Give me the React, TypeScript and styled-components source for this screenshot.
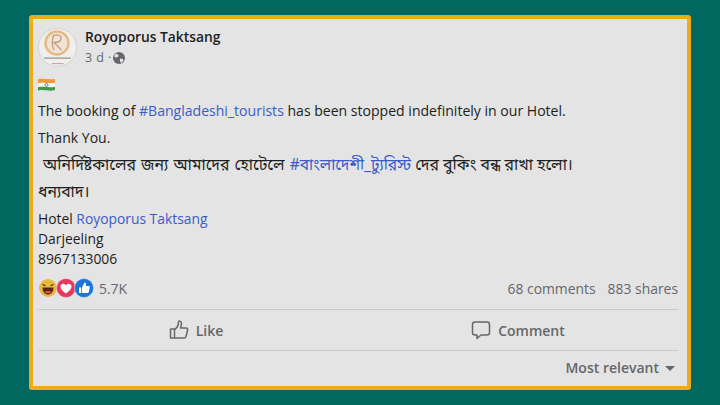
import React from "react";
import styled, { createGlobalStyle } from "styled-components";

const GlobalStyle = createGlobalStyle`
  html, body {
    margin: 0;
    padding: 0;
  }
  body {
    font-family: "Open Sans", "Noto Sans", "Liberation Sans", sans-serif;
  }
`;

const Page = styled.div`
  box-sizing: border-box;
  width: 720px;
  height: 405px;
  padding: 15px 29px;
  background-color: #01685f;
  overflow: hidden;
`;

const Card = styled.article`
  box-sizing: border-box;
  height: 375px;
  padding: 9px 9px 0 5px;
  display: flex;
  flex-direction: column;
  background-color: #e4e4e4;
  border: 4px solid #efab1b;
  border-radius: 3px;
`;

const Header = styled.header`
  display: flex;
  gap: 8px;
  height: 40px;
`;

const Avatar = styled.svg`
  width: 39px;
  height: 39px;
  flex: none;
`;

const Author = styled.div`
  display: flex;
  flex-direction: column;
  margin-top: -1px;
`;

const Name = styled.div`
  font-size: 13.8px;
  line-height: 20px;
  font-weight: 600;
  color: #1c1e21;
`;

const Meta = styled.div`
  display: flex;
  align-items: center;
  gap: 1px;
  margin-top: 2px;
  font-size: 12.5px;
  line-height: 17px;
  color: #65676b;
  letter-spacing: 0.4px;
`;

const Body = styled.div`
  margin-top: 6px;
  color: #1c1e21;
  font-size: 14.05px;
`;

const FlagWrap = styled.div`
  height: 22px;
  display: flex;
  align-items: center;
`;

const Line = styled.p<{ $gap?: number; $bn?: boolean; $size?: number }>`
  margin: ${(p) => p.$gap ?? 0}px 0 0;
  line-height: 20px;
  font-size: ${(p) => (p.$bn ? 15.8 : p.$size ?? 14.05)}px;
  font-family: ${(p) =>
    p.$bn
      ? '"Noto Sans Bengali", "Noto Serif Bengali", "Lohit Bengali", "FreeSerif", "Open Sans", sans-serif'
      : "inherit"};
`;

const Lead = styled.span`
  word-spacing: 1px;
`;

const Tag = styled.span<{ $size?: number }>`
  color: #3b5bc9;
  font-size: ${(p) => (p.$size ? `${p.$size}px` : "inherit")};
`;

const Stats = styled.div`
  margin-top: 4px;
  height: 30px;
  padding-bottom: 6px;
  display: flex;
  align-items: center;
  justify-content: space-between;
  color: #65676b;
  font-size: 13.9px;
`;

const Reactions = styled.div`
  display: flex;
  align-items: center;
  gap: 5px;
`;

const ReactionIcons = styled.svg`
  width: 56px;
  height: 20px;
`;

const Counts = styled.div`
  display: flex;
  gap: 12px;
`;

const Actions = styled.div`
  height: 40px;
  display: flex;
  border-top: 1px solid #c9c9c9;
  border-bottom: 1px solid #c9c9c9;
`;

const ActionButton = styled.div<{ $inset?: number }>`
  box-sizing: border-box;
  width: 50%;
  padding-right: ${(p) => p.$inset ?? 0}px;
  display: flex;
  align-items: center;
  justify-content: center;
  gap: 7px;
  color: #65676b;
  font-size: 14px;
  font-weight: 600;
`;

const Sort = styled.div`
  height: 32px;
  display: flex;
  align-items: center;
  justify-content: flex-end;
  gap: 6px;
  padding-right: 3px;
  color: #65676b;
  font-size: 14px;
  font-weight: 600;
`;

const Caret = styled.span`
  width: 0;
  height: 0;
  margin-top: 2px;
  border-left: 5px solid transparent;
  border-right: 5px solid transparent;
  border-top: 5px solid #65676b;
`;

const ActionIcon = styled.svg`
  width: 20px;
  height: 20px;
  fill: none;
  stroke: #65676b;
  stroke-width: 1.5;
  stroke-linejoin: round;
  stroke-linecap: round;
`;

const LogoAvatar = () => (
  <Avatar viewBox="0 0 39 39">
    <circle cx="19.5" cy="19.5" r="19" fill="#f1efec" stroke="#cfcdca" strokeWidth="0.8" />
    <circle cx="19" cy="15" r="11.5" fill="#efe4d8" stroke="#e6b985" strokeWidth="2.4" />
    <path d="M15 8c4-2 9-1 8 3s-5 3.500-7 3.500l7.500 7.500M15.500 7.500C14 12 14 18 16 22" fill="none" stroke="#c19a7c" strokeWidth="1.300" />
    <rect x="6" y="29.500" width="27" height="1.200" fill="#94918c" />
    <rect x="13.500" y="35" width="12" height="1.200" fill="#d3a0a8" />
  </Avatar>
);

const Flag = () => (
  <svg width="17" height="14" viewBox="1 1.500 15 12">
    <path d="M1 2.500c5-1.500 10 1 15-.5v3.500c-5 1.500-10-1-15 .5z" fill="#f2993a" />
    <path d="M1 6c5-1.500 10 1 15-.5V9C11 10.500 6 8 1 9.500z" fill="#f4f4f4" />
    <path d="M1 9.500C6 8 11 10.500 16 9v3c-5 1.500-10-1-15 .5z" fill="#3f9a45" />
    <circle cx="8.500" cy="7.500" r="1.300" fill="none" stroke="#44519a" strokeWidth="0.600" />
  </svg>
);

const Globe = () => (
  <svg width="12" height="12" viewBox="0 0 12 12">
    <circle cx="6" cy="6" r="6" fill="#65676b" />
    <path d="M3 1.500 5.500 3 5 5 2.500 5.500 1 4zM7 6.500l3 .5.500 1.500L8.500 11 7 9.500z" fill="#e4e4e4" />
  </svg>
);

const ReactionStrip = () => (
  <ReactionIcons viewBox="0 0 56 20">
    <circle cx="10" cy="10" r="9" fill="#e8b93f" />
    <path d="M4.500 9.500h11C15.500 14 13 16.500 10 16.500S4.500 14 4.500 9.500z" fill="#5b2415" />
    <path d="M6.500 14c1-1.300 6-1.300 7 0-1 1.800-6 1.800-7 0z" fill="#e0524c" />
    <path d="M4.500 6.500l3 1.200M15.500 6.500l-3 1.200" stroke="#5b2415" strokeWidth="1.200" />
    <circle cx="28" cy="10" r="9.500" fill="#e5385a" stroke="#e4e4e4" strokeWidth="0.500" />
    <path d="M28 15.500c-4-3-5.500-4.800-5.500-7 0-3 4-3.800 5.500-1 1.500-2.800 5.500-2 5.500 1 0 2.200-1.500 4-5.500 7z" fill="#fff" />
    <circle cx="46" cy="10" r="9.500" fill="#1b74d8" stroke="#e4e4e4" strokeWidth="0.500" />
    <path d="M41 9.500h2.200v5.500H41zM44 9.500l2.500-5c1.500 0 1.800 1 1.500 3.500h3c.8 0 1 .8.800 1.500l-1 4.500c-.2.600-.6 1-1.300 1H44z" fill="#fff" />
  </ReactionIcons>
);

const LikeIcon = () => (
  <ActionIcon viewBox="0 0 20 20">
    <path d="M1.500 9h4v9h-4zM5.500 9.500C8 8 9.500 5 9.500 2c0-1.500 3-1.300 3 1.500 0 1.500-.5 3-1 4.500h5.500c1.500 0 2 1.500 1.500 2.500l-1.500 6c-.3 1-1 1.500-2 1.500H5.500" />
  </ActionIcon>
);

const CommentIcon = () => (
  <ActionIcon viewBox="0 0 20 20">
    <path d="M4 2h12c1.500 0 2.500 1 2.500 2.500v8c0 1.500-1 2.500-2.500 2.500H10l-4 3.500V15H4c-1.500 0-2.500-1-2.500-2.500v-8C1.500 3 2.500 2 4 2z" />
  </ActionIcon>
);

export default function App() {
  return (
    <Page>
      <GlobalStyle />
      <Card>
        <Header>
          <LogoAvatar />
          <Author>
            <Name>Royoporus Taktsang</Name>
            <Meta>
              <span>3 d ·</span>
              <Globe />
            </Meta>
          </Author>
        </Header>
        <Body>
          <FlagWrap>
            <Flag />
          </FlagWrap>
          <Line $gap={5}>
            The booking of <Tag>#Bangladeshi_tourists</Tag> has been stopped indefinitely in our Hotel.
          </Line>
          <Line $gap={7}>Thank You.</Line>
          <Line $gap={8} $bn>
            <Lead>&nbsp;অনির্দিষ্টকালের জন্য আমাদের হোটেলে </Lead>
            <Tag $size={15.5}>#বাংলাদেশী_ট্যুরিস্ট</Tag> দের বুকিং বন্ধ রাখা হলো।
          </Line>
          <Line $gap={7} $bn>ধন্যবাদ।</Line>
          <Line $gap={6} $size={13.85}>
            Hotel <Tag>Royoporus Taktsang</Tag>
          </Line>
          <Line $size={13.85}>Darjeeling</Line>
          <Line $size={13.85}>8967133006</Line>
        </Body>
        <Stats>
          <Reactions>
            <ReactionStrip />
            <span>5.7K</span>
          </Reactions>
          <Counts>
            <span>68 comments</span>
            <span>883 shares</span>
          </Counts>
        </Stats>
        <Actions>
          <ActionButton $inset={4}>
            <LikeIcon />
            Like
          </ActionButton>
          <ActionButton>
            <CommentIcon />
            Comment
          </ActionButton>
        </Actions>
        <Sort>
          Most relevant
          <Caret />
        </Sort>
      </Card>
    </Page>
  );
}
